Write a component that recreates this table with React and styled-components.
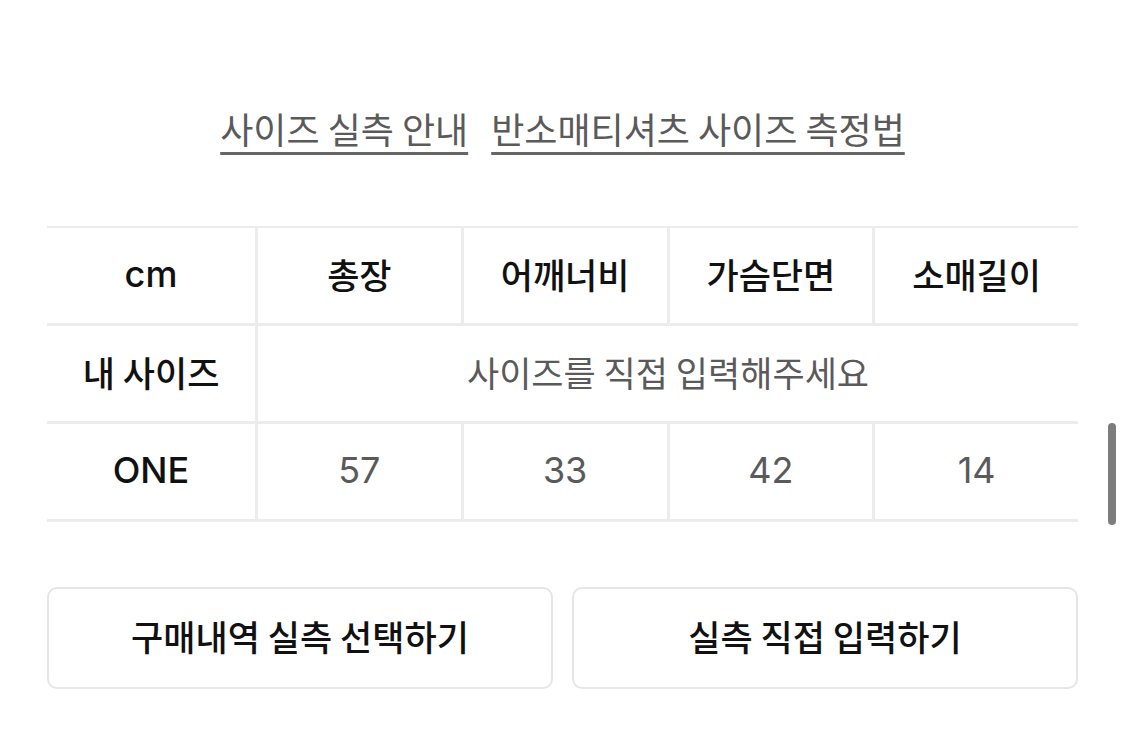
import React from "react";
import styled, { createGlobalStyle } from "styled-components";

const Global = createGlobalStyle`
  html, body { margin: 0; padding: 0; background: #fff; }
  body { font-family: "Noto Sans CJK KR", "Noto Sans", sans-serif; }
`;

const Page = styled.div`
  position: relative;
  width: 1125px;
  height: 738px;
  box-sizing: border-box;
  padding: 102px 47px 0 47px;
  overflow: hidden;
`;

const LinkRow = styled.div`
  display: flex;
  justify-content: center;
  gap: 23px;
  height: 52px;
  align-items: center;
`;

const Link = styled.a`
  font-size: 36px;
  color: #5a5a5a;
  text-decoration: underline;
  text-decoration-thickness: 3px;
  text-underline-offset: 8px;
  text-decoration-color: #666;
  line-height: 1;
`;

const Table = styled.div`
  margin-top: 72px;
  display: grid;
  grid-template-columns: 208px repeat(4, 1fr);
  border-top: 2px solid #ececec;
`;

const Cell = styled.div`
  height: 95px;
  box-sizing: content-box;
  display: flex;
  align-items: center;
  justify-content: center;
  padding-bottom: 0;
  border-bottom: 3px solid #ececec;
  border-left: ${(p) => (p.$first ? "none" : "3px solid #ececec")};
  grid-column: ${(p) => p.$span || "auto"};
  font-size: ${(p) => (p.$latin ? "36px" : "35px")};
  font-weight: ${(p) => (p.$head ? 500 : 400)};
  color: ${(p) => (p.$head ? "#111" : "#5a5a5a")};
  font-family: ${(p) =>
    p.$latin ? '"Inter", "Noto Sans CJK KR", sans-serif' : '"Noto Sans CJK KR", sans-serif'};
`;

const CellText = styled.span`
  position: relative;
  top: -2px;
`;

const Buttons = styled.div`
  margin-top: 65px;
  display: grid;
  grid-template-columns: 1fr 1fr;
  gap: 19px;
`;

const Button = styled.button`
  height: 102px;
  padding: 0 0 6px;
  border: 2px solid #e6e6e6;
  border-radius: 10px;
  background: #fff;
  font-family: "Noto Sans CJK KR", sans-serif;
  font-size: 35px;
  font-weight: 500;
  color: #111;
`;

const Scrollbar = styled.div`
  position: absolute;
  left: 1108px;
  top: 423px;
  width: 8px;
  height: 102px;
  border-radius: 4px;
  background: #7d7d7d;
`;

const headers = ["총장", "어깨너비", "가슴단면", "소매길이"];
const values = ["57", "33", "42", "14"];

export default function App() {
  return (
    <>
      <Global />
      <Page>
        <LinkRow>
          <Link>사이즈 실측 안내</Link>
          <Link>반소매티셔츠 사이즈 측정법</Link>
        </LinkRow>
        <Table>
          <Cell $first $head $latin><CellText>cm</CellText></Cell>
          {headers.map((h) => (
            <Cell key={h} $head><CellText>{h}</CellText></Cell>
          ))}
          <Cell $first $head><CellText>내 사이즈</CellText></Cell>
          <Cell $span="2 / 6"><CellText>사이즈를 직접 입력해주세요</CellText></Cell>
          <Cell $first $head $latin><CellText>ONE</CellText></Cell>
          {values.map((v, i) => (
            <Cell key={i} $latin><CellText>{v}</CellText></Cell>
          ))}
        </Table>
        <Buttons>
          <Button>구매내역 실측 선택하기</Button>
          <Button>실측 직접 입력하기</Button>
        </Buttons>
        <Scrollbar />
      </Page>
    </>
  );
}
